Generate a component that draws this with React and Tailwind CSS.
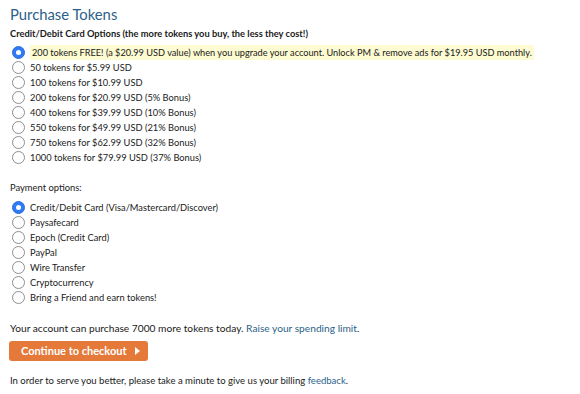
import React from "react";

function Radio({ checked }) {
  if (checked) {
    return (
      <span className="inline-flex items-center justify-center w-[13px] h-[13px] rounded-full shrink-0 bg-[#2f7bf5] border border-[#2a6fdc]">
        <span className="w-[5px] h-[5px] rounded-full bg-white" />
      </span>
    );
  }
  return (
    <span className="inline-block w-[13px] h-[13px] rounded-full shrink-0 box-border border border-[#8e8e8e] bg-white" />
  );
}

function Row({ checked, children, highlight }) {
  return (
    <label className="flex items-center h-[15px] whitespace-nowrap">
      <span className="w-[15px] flex justify-end">
        <Radio checked={checked} />
      </span>
      <span
        className={
          highlight
            ? "ml-[5px] bg-[#fdfbd2] px-[2px] leading-[15px] text-[9.2px]"
            : "ml-[5px] leading-[15px] text-[9.3px]"
        }
      >
        {children}
      </span>
    </label>
  );
}

export default function App() {
  const tokens = [
    "50 tokens for $5.99 USD",
    "100 tokens for $10.99 USD",
    "200 tokens for $20.99 USD (5% Bonus)",
    "400 tokens for $39.99 USD (10% Bonus)",
    "550 tokens for $49.99 USD (21% Bonus)",
    "750 tokens for $62.99 USD (32% Bonus)",
    "1000 tokens for $79.99 USD (37% Bonus)",
  ];
  const pays = [
    "Paysafecard",
    "Epoch (Credit Card)",
    "PayPal",
    "Wire Transfer",
    "Cryptocurrency",
    "Bring a Friend and earn tokens!",
  ];
  return (
    <div
      className="w-[580px] h-[394px] bg-white text-[#1a1a1a] text-[10.2px] px-[10px] pt-[4px]"
      style={{ fontFamily: "Lato, sans-serif" }}
    >
      <h1 className="text-[14.8px] leading-[20px] text-[#2c5f8a]">Purchase Tokens</h1>
      <div className="mt-[3px] font-bold leading-[14px] text-[9.3px]">
        Credit/Debit Card Options (the more tokens you buy, the less they cost!)
      </div>
      <div className="mt-[4px]">
        <Row checked highlight>
          200 tokens FREE! (a $20.99 USD value) when you upgrade your account. Unlock PM &amp; remove ads for $19.95 USD monthly.
        </Row>
        {tokens.map((t) => (
          <Row key={t}>{t}</Row>
        ))}
      </div>
      <div className="mt-[16px] leading-[14px] text-[9.4px]">Payment options:</div>
      <div className="mt-[5px]">
        <Row checked>Credit/Debit Card (Visa/Mastercard/Discover)</Row>
        {pays.map((t) => (
          <Row key={t}>{t}</Row>
        ))}
      </div>
      <p className="mt-[16px] leading-[14px]">
        Your account can purchase 7000 more tokens today.{" "}
        <a className="text-[#2c5f8a]">Raise your spending limit</a>.
      </p>
      <button className="mt-[6px] ml-[-1px] flex items-center gap-[8px] h-[20px] w-[139px] pl-[12px] rounded-[3px] bg-[#e4793a] text-white font-bold text-[11px]">
        Continue to checkout
        <svg width="5" height="8" viewBox="0 0 5 8">
          <path d="M0 0 L5 4 L0 8 Z" fill="white" />
        </svg>
      </button>
      <p className="mt-[13px] leading-[14px] text-[9.55px]">
        In order to serve you better, please take a minute to give us your billing{" "}
        <a className="text-[#2c5f8a]">feedback</a>.
      </p>
    </div>
  );
}
